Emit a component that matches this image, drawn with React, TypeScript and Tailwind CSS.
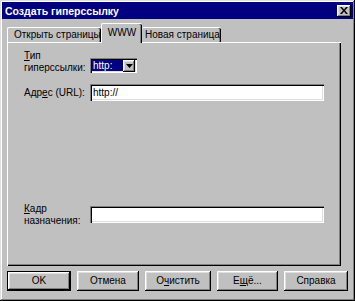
import React from "react";

const raised =
  "shadow-[inset_-1px_-1px_#000,inset_1px_1px_#fff,inset_-2px_-2px_#808080,inset_2px_2px_#dfdfdf]";
const sunken =
  "shadow-[inset_1px_1px_#808080,inset_2px_2px_#000,inset_-1px_-1px_#fff,inset_-2px_-2px_#dfdfdf]";

function Btn({ children, w, focus }: { children: React.ReactNode; w: string; focus?: boolean }) {
  return (
    <div className={`${w} h-[20px] ${focus ? "border border-black" : ""}`}>
      <div className={`flex h-full w-full items-center justify-center whitespace-nowrap bg-[#c0c0c0] ${raised}`}>
        {children}
      </div>
    </div>
  );
}

export default function App() {
  return (
    <div
      className="flex h-[301px] w-[355px] flex-col whitespace-nowrap bg-[#c0c0c0] p-[2px] text-[10px] leading-[12px] text-black shadow-[inset_-1px_-1px_#000,inset_1px_1px_#dfdfdf,inset_-2px_-2px_#808080,inset_2px_2px_#fff]"
      style={{ fontFamily: '"Liberation Sans", Arial, sans-serif' }}
    >
      {/* title bar */}
      <div className="flex h-[17px] items-center justify-between bg-[#000080] pl-[3px] pr-[2px]">
        <span className="text-[10.5px] font-bold text-white">Создать гиперссылку</span>
        <div className={`flex h-[12px] w-[14px] items-center justify-center bg-[#c0c0c0] ${raised}`}>
          <svg width="8" height="7" viewBox="0 0 8 7">
            <path d="M0 0h2l2 2.5L6 0h2L5 3.5 8 7H6L4 4.5 2 7H0l3-3.5z" fill="#000" />
          </svg>
        </div>
      </div>

      {/* tabs */}
      <div className="mt-[4px] flex h-[19px] items-end pl-[5px]">
        <div className="flex h-[15px] w-[94px] items-center rounded-t-[2px] border-l border-t border-white pl-[6px] shadow-[inset_-1px_0_#000,inset_-2px_0_#808080]">
          Открыть страницы
        </div>
        <div className="relative z-10 -mb-[1px] flex h-[20px] w-[41px] items-center justify-center rounded-t-[2px] border-l border-t border-white bg-[#c0c0c0] pb-[2px] shadow-[inset_-1px_0_#000,inset_-2px_0_#808080]">
          WWW
        </div>
        <div className="flex h-[15px] w-[79px] items-center rounded-t-[2px] border-t border-white pl-[3px] shadow-[inset_-1px_0_#000,inset_-2px_0_#808080]">
          Новая страница
        </div>
      </div>

      {/* panel */}
      <div className="ml-[5px] flex h-[224px] w-[334px] flex-col border-l border-t border-white pl-[16px] shadow-[inset_-1px_-1px_#000,inset_-2px_-2px_#808080]">
        <div className="mt-[7px] flex items-start">
          <div className="w-[66px]">
            <div>
              <span className="underline">Т</span>ип
            </div>
            <div>гиперссылки:</div>
          </div>
          <div className={`mt-[8px] flex h-[15px] w-[47px] items-center bg-white p-[2px] ${sunken}`}>
            <div className="flex h-full flex-1 items-center bg-[#000080] pl-[1px] text-white">http:</div>
            <div className={`flex h-[12px] w-[12px] items-center justify-center bg-[#c0c0c0] ${raised}`}>
              <svg width="7" height="4" viewBox="0 0 7 4">
                <path d="M0 0h7L3.5 4z" fill="#000" />
              </svg>
            </div>
          </div>
        </div>

        <div className="mt-[10px] flex items-center">
          <div className="w-[66px]">
            Адр<span className="underline">е</span>с (URL):
          </div>
          <div className={`flex h-[17px] w-[234px] items-center bg-white pl-[3px] ${sunken}`}>http://</div>
        </div>

        <div className="mt-[102px] flex items-start">
          <div className="w-[66px]">
            <div>
              <span className="underline">К</span>адр
            </div>
            <div>назначения:</div>
          </div>
          <div className={`mt-[3px] h-[17px] w-[234px] bg-white ${sunken}`} />
        </div>
      </div>

      {/* buttons */}
      <div className="mt-[5px] flex gap-[6px] pl-[5px]">
        <Btn w="w-[64px]" focus>
          OK
        </Btn>
        <Btn w="w-[62px]">Отмена</Btn>
        <Btn w="w-[66px]">
          О<span className="underline">ч</span>истить
        </Btn>
        <Btn w="w-[61px]">
          Е<span className="underline">щ</span>ё...
        </Btn>
        <Btn w="w-[64px]">Справка</Btn>
      </div>
    </div>
  );
}
